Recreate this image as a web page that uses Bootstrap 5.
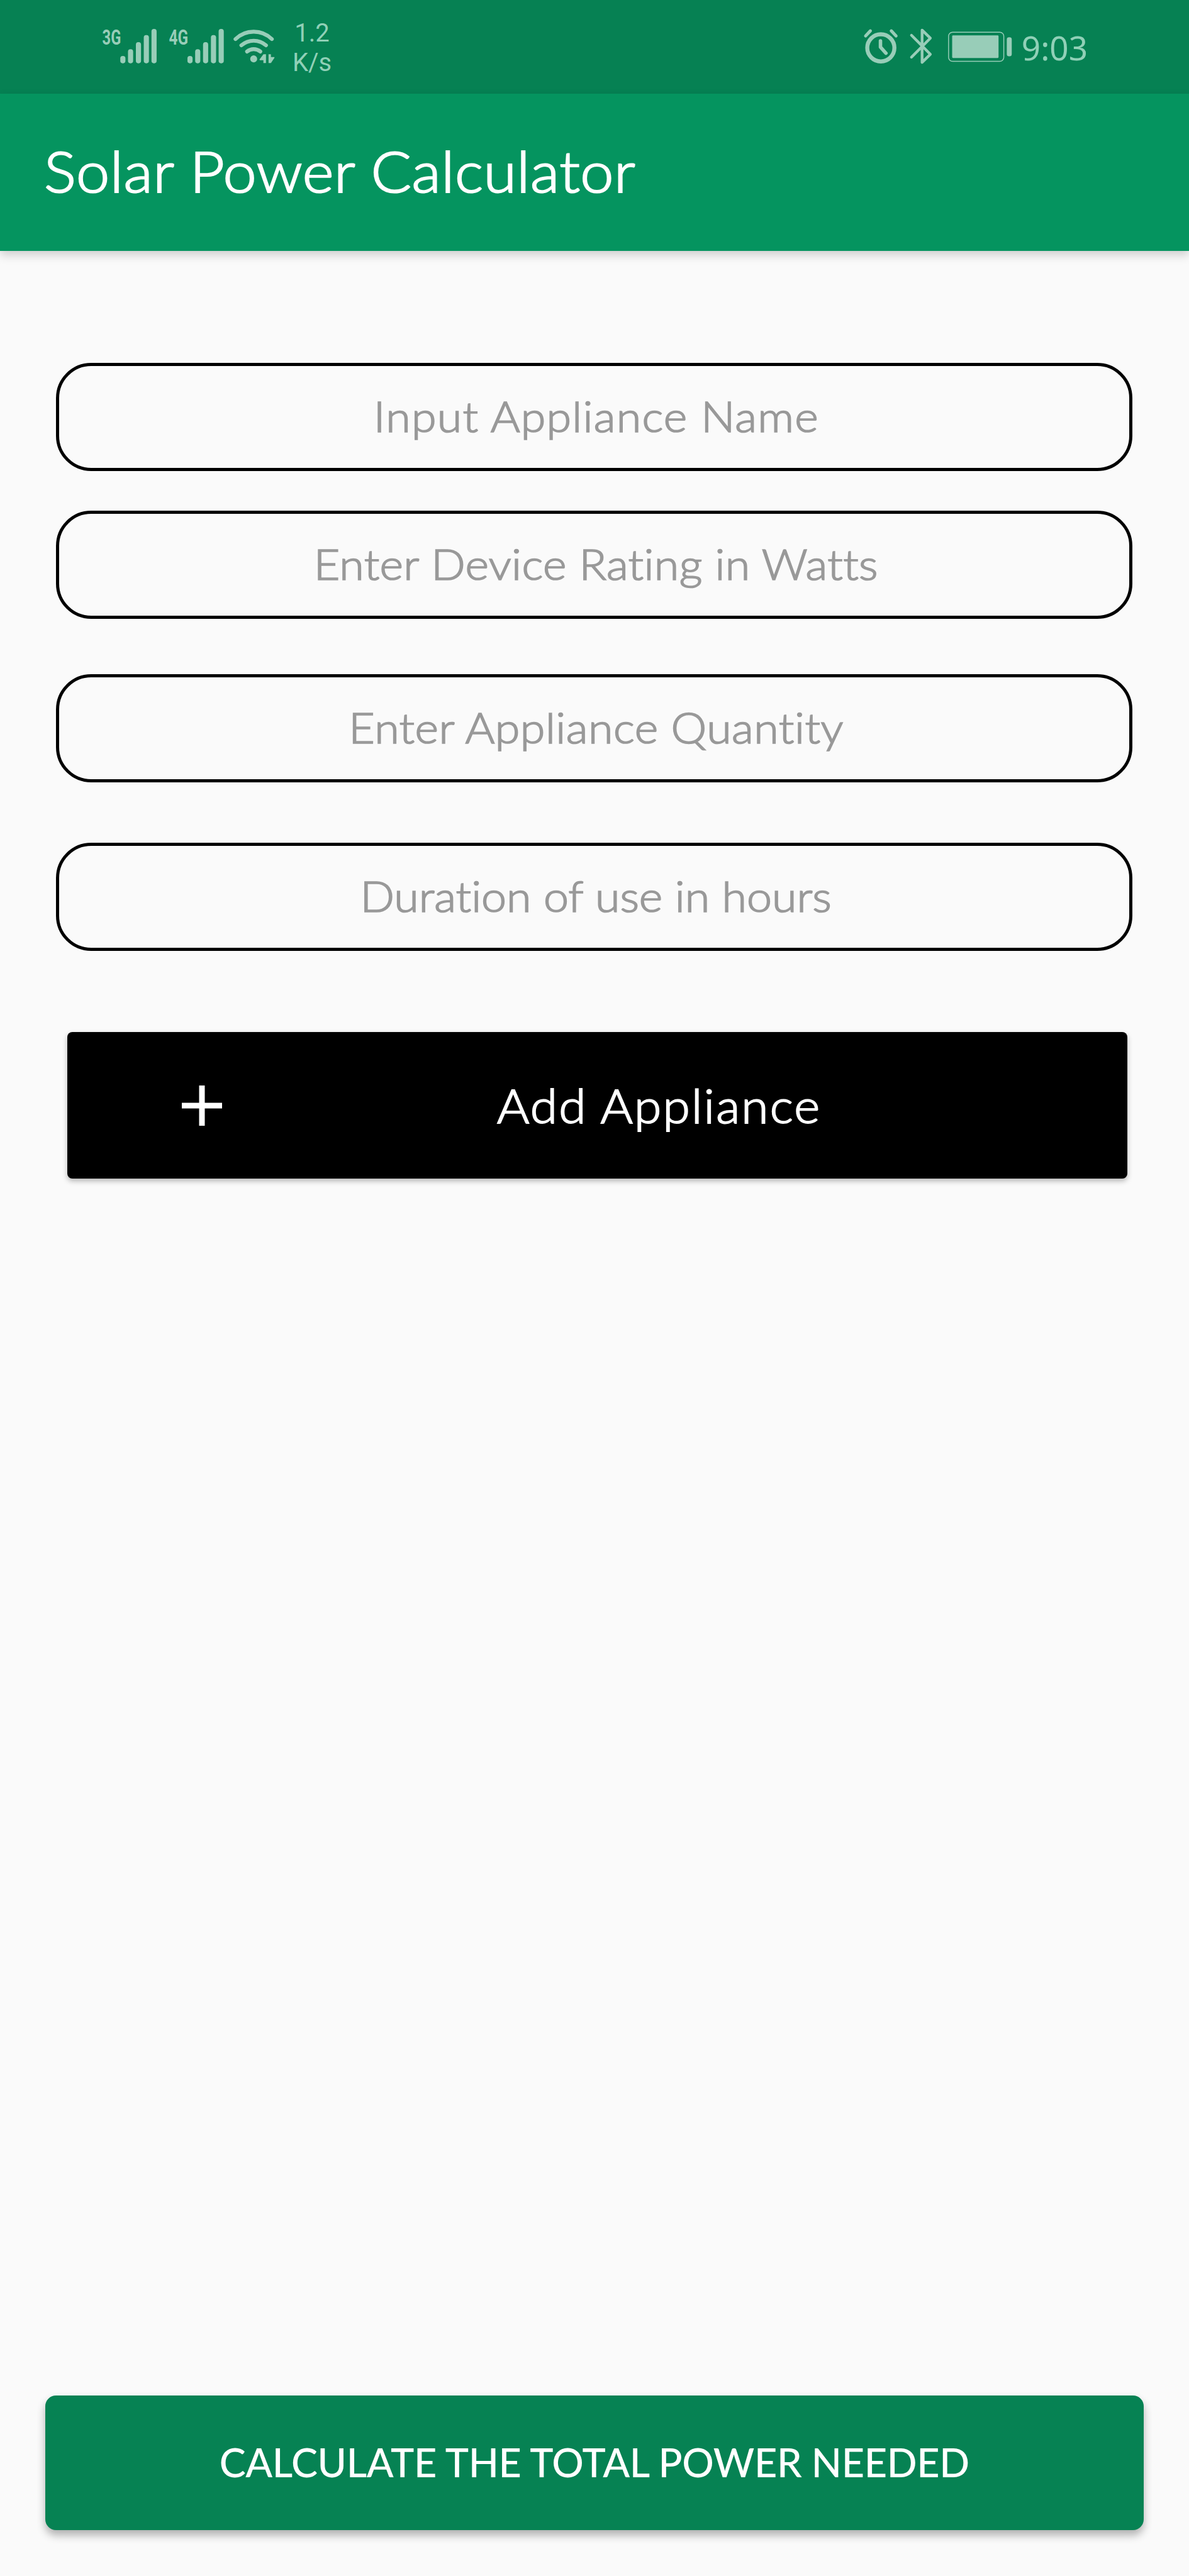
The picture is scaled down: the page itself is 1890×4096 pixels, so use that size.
<!DOCTYPE html>
<html lang="en">
<head>
<meta charset="utf-8">
<meta name="viewport" content="width=device-width, initial-scale=1">
<title>Solar Power Calculator</title>
<link href="https://cdn.jsdelivr.net/npm/bootstrap@5.3.0/dist/css/bootstrap.min.css" rel="stylesheet">
<style>
  body { background: #fafafa; font-family: Lato, "Open Sans", sans-serif; font-weight: 300; font-variant-ligatures: none; }
  .screen { height: 4096px; }

  .status-bar { height: 149px; background: #068153; color: #90d0b7; padding: 0 161px 0 160px; }
  .status-icons { margin-top: 35px; height: 70px; fill: #98cdb8; display: block; }
  .status-icons .ln { fill: none; stroke: #98cdb8; stroke-linecap: round; stroke-linejoin: round; }
  .status-icons text { font-family: Roboto, sans-serif; font-weight: 700; font-size: 116px; }
  .net-speed { margin: 29px 0 0 24px; width: 64px; font: 400 40px/47.25px Roboto, sans-serif; }
  .clock { margin: 49px 0 0 14px; font: 400 53px/53px "Noto Sans", sans-serif; }

  .app-bar { height: 250px; background: #05945f; padding: 0 70px; box-shadow: 0 7px 14px rgba(0,0,0,.17); }
  .app-title { color: #fff; font-size: 90px; line-height: 1; letter-spacing: .5px; -webkit-text-stroke: 2.2px #fff; margin-top: -7px; }

  /* widens the light face a little */
  .wide { display: inline-block; white-space: nowrap; transform: scaleX(1.07); }
  .wide-start { transform: scaleX(1.06); transform-origin: 0 50%; }

  .appliance-form { padding: 178px 90px 0 89px; }
  .field.form-control {
    height: 172px; border: 5.25px solid #000; border-radius: 56px; background: transparent;
    padding: 0 10px 4px 16px; font-size: 67px; font-weight: 300; line-height: 1.2;
    color: #999; -webkit-text-stroke: 1.7px #999;
  }
  .f-name { letter-spacing: 1.2px; margin-bottom: 63px; }
  .f-watts { letter-spacing: .35px; margin-bottom: 88px; }
  .f-quantity { letter-spacing: .5px; margin-bottom: 96px; }
  .f-hours { letter-spacing: 0; margin-bottom: 129px; }

  .btn-add {
    --bs-btn-color: #fff; --bs-btn-bg: #000; --bs-btn-border-width: 0;
    --bs-btn-border-radius: 8px; --bs-btn-padding-x: 0; --bs-btn-padding-y: 0;
    height: 233px; margin: 0 8px 0 18px; padding-left: 182px;
    font-size: 74px; font-weight: 300; line-height: 1; letter-spacing: 2.1px; -webkit-text-stroke: 1.9px #fff;
    box-shadow: 0 4px 9px rgba(0,0,0,.28);
  }
  .btn-add svg { width: 64px; height: 64px; margin-right: 437px; }

  .btn-total {
    --bs-btn-color: #fff; --bs-btn-bg: #068253; --bs-btn-border-width: 0;
    --bs-btn-border-radius: 17px; --bs-btn-padding-x: 0; --bs-btn-padding-y: 0;
    height: 214px; margin: 0 72px 73px 71.5px; padding-bottom: 4px;
    font-size: 63px; font-weight: 500; line-height: 1; letter-spacing: -.35px;
    box-shadow: 0 8px 14px rgba(0,0,0,.3);
  }
</style>
</head>
<body>
<div class="screen d-flex flex-column">

  <div class="status-bar d-flex justify-content-between align-items-start">
    <div class="d-flex align-items-start">
      <!-- cellular signals and wifi -->
      <svg class="status-icons" width="280" viewBox="70 60 960 240">
        <text x="79" y="182" textLength="102" lengthAdjust="spacingAndGlyphs">3G</text>
        <rect x="177" y="245" width="28" height="40" rx="13"/>
        <rect x="219" y="208" width="28" height="77" rx="13"/>
        <rect x="262" y="170" width="28" height="115" rx="13"/>
        <rect x="305" y="131" width="28" height="154" rx="13"/>
        <rect x="347" y="98" width="28" height="187" rx="13"/>
        <text x="442" y="182" textLength="105" lengthAdjust="spacingAndGlyphs">4G</text>
        <rect x="543" y="245" width="28" height="40" rx="13"/>
        <rect x="585" y="208" width="28" height="77" rx="13"/>
        <rect x="628" y="170" width="28" height="115" rx="13"/>
        <rect x="671" y="131" width="28" height="154" rx="13"/>
        <rect x="713" y="98" width="28" height="187" rx="13"/>
        <g class="ln" stroke-width="21">
          <path d="M805 153A142 142 0 0 1 1003 153"/>
          <path d="M837 187A102 102 0 0 1 971 187"/>
          <path d="M868 221A56 56 0 0 1 940 221"/>
        </g>
        <circle cx="904" cy="261" r="19"/>
        <path d="M936 264L957 236H971V284H957V268H937Z"/>
        <path d="M985 236H998V251H1017V255L998 284H985Z"/>
      </svg>
      <div class="net-speed text-center">1.2<br>K/s</div>
    </div>
    <div class="d-flex align-items-start">
      <!-- alarm, bluetooth, battery -->
      <svg class="status-icons" width="239" viewBox="80 60 820 240">
        <circle class="ln" cx="180" cy="201" r="74" stroke-width="22"/>
        <path class="ln" stroke-width="19" d="M178 163V197L208 230"/>
        <path class="ln" stroke-width="17" d="M97 136L123 108M237 108L263 136"/>
        <path class="ln" stroke-width="15" d="M347 132L450 236L405 280V104L450 148L347 252"/>
        <rect class="ln" x="549.500" y="115.500" width="301" height="159" rx="22" stroke-width="5"/>
        <rect x="569" y="133" width="253" height="123" rx="5"/>
        <rect x="867" y="143" width="27" height="104" rx="12"/>
      </svg>
      <div class="clock">9:03</div>
    </div>
  </div>

  <header class="app-bar d-flex align-items-center">
    <h1 class="app-title wide wide-start fw-light mb-0">Solar Power Calculator</h1>
  </header>

  <main class="appliance-form flex-grow-1">
    <div class="field form-control d-flex align-items-center justify-content-center f-name" role="textbox"><span class="wide">Input Appliance Name</span></div>
    <div class="field form-control d-flex align-items-center justify-content-center f-watts" role="textbox"><span class="wide">Enter Device Rating in Watts</span></div>
    <div class="field form-control d-flex align-items-center justify-content-center f-quantity" role="textbox"><span class="wide">Enter Appliance Quantity</span></div>
    <div class="field form-control d-flex align-items-center justify-content-center f-hours" role="textbox"><span class="wide">Duration of use in hours</span></div>
    <div class="d-grid">
      <button class="btn btn-add d-flex align-items-center" type="button">
        <svg viewBox="0 0 64 64"><path d="M32 0V64M0 32H64" stroke="#fff" stroke-width="9"/></svg>
        <span class="wide wide-start">Add Appliance</span>
      </button>
    </div>
  </main>

  <button class="btn btn-total" type="button">CALCULATE THE TOTAL POWER NEEDED</button>
</div>
<script src="https://cdn.jsdelivr.net/npm/bootstrap@5.3.0/dist/js/bootstrap.bundle.min.js"></script>
</body>
</html>
